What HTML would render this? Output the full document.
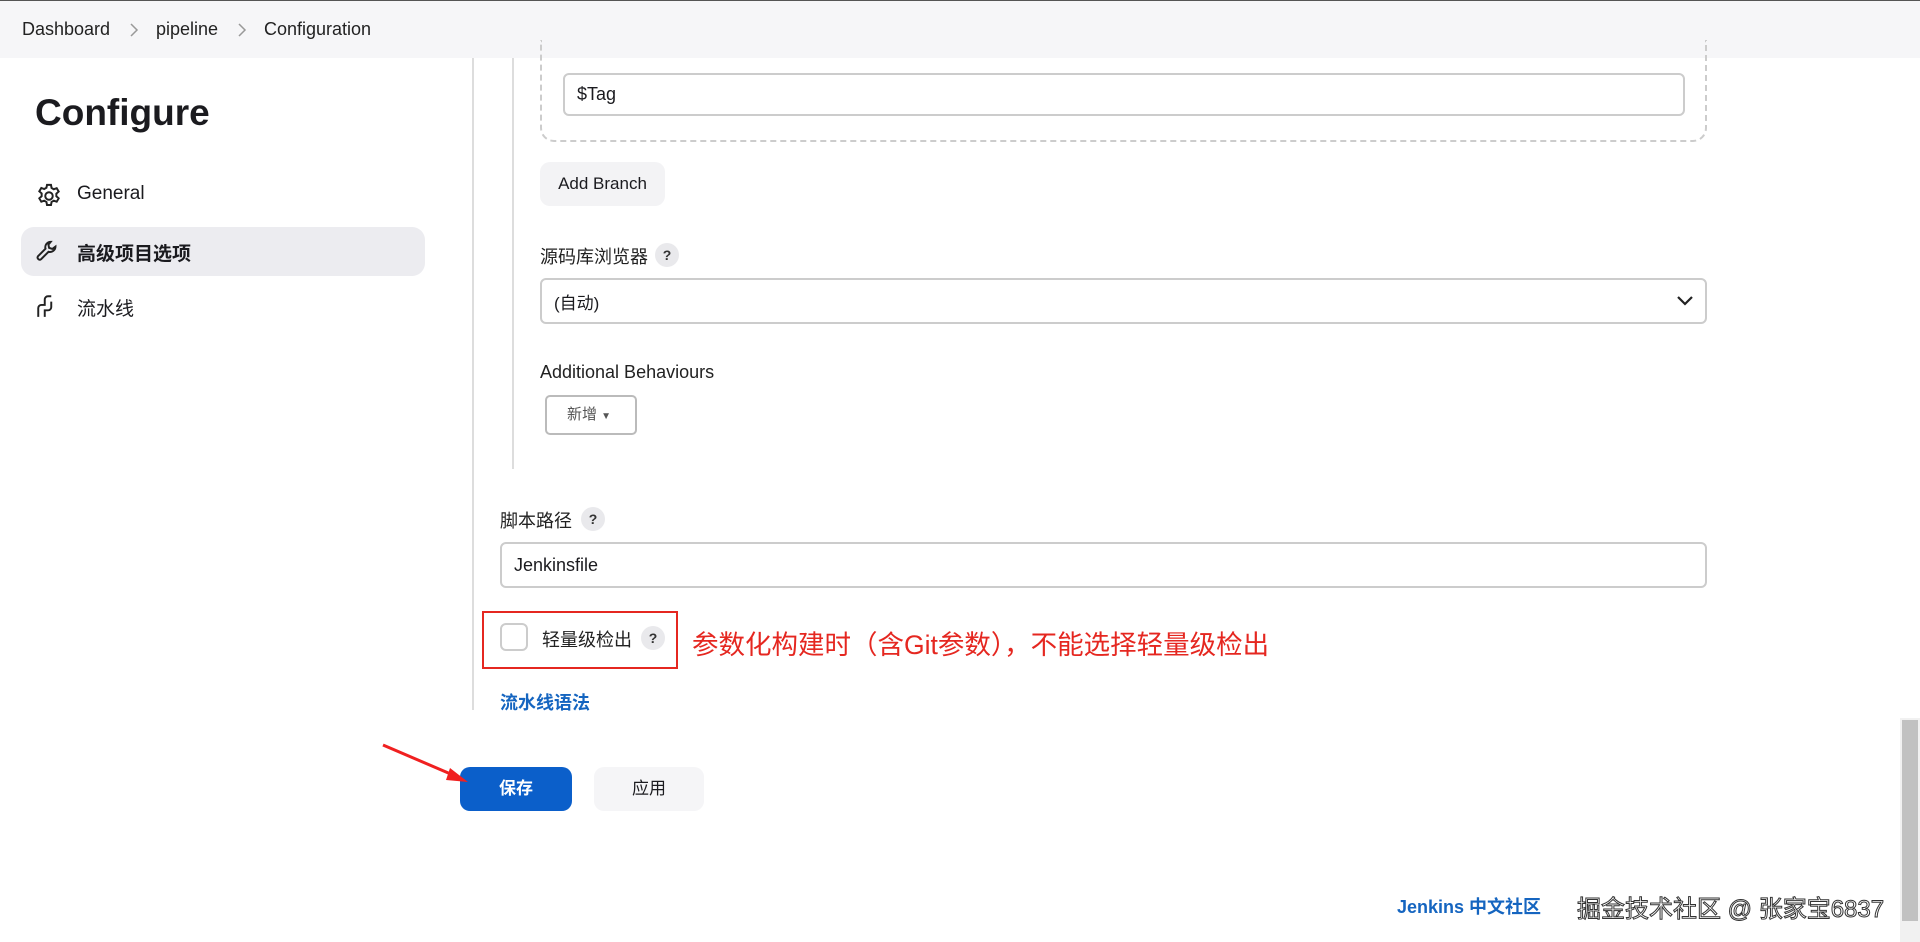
<!DOCTYPE html>
<html><head><meta charset="utf-8"><style>
*{box-sizing:border-box;margin:0;padding:0}
body{width:1920px;height:942px;overflow:hidden;background:#fff;font-family:"Liberation Sans","Noto Sans CJK SC",sans-serif;color:#1b1b1f;position:relative}
.a{position:absolute}
.bar{left:0;top:0;width:1920px;height:58px;background:#f6f6f8;border-top:1px solid #555}
.bc{top:19px;font-size:18px;color:#222}
.q{width:24px;height:24px;border-radius:50%;background:#e9e9ec;font-size:14px;font-weight:bold;text-align:center;line-height:24px;color:#333}
.inp{border:2px solid #ccc;border-radius:6px;background:#fff;font-size:18px;padding-left:20px;display:flex;align-items:center}
.lbl{font-size:18px;color:#222}
</style></head><body>
<div class="a bar"></div>
<div class="a bc" style="left:22px">Dashboard</div>
<svg class="a" style="left:128px;top:22px" width="12" height="16" viewBox="0 0 12 16" fill="none" stroke="#999" stroke-width="1.5"><path d="M3 2l6 6-6 6"/></svg>
<div class="a bc" style="left:156px">pipeline</div>
<svg class="a" style="left:236px;top:22px" width="12" height="16" viewBox="0 0 12 16" fill="none" stroke="#999" stroke-width="1.5"><path d="M3 2l6 6-6 6"/></svg>
<div class="a bc" style="left:264px">Configuration</div>

<div class="a" style="left:35px;top:92px;font-size:37px;font-weight:bold">Configure</div>
<svg class="a" style="left:35px;top:182px" width="28" height="28" viewBox="0 0 24 24" fill="none" stroke="#222" stroke-width="1.7"><circle cx="12" cy="12" r="3.2"/><path d="M10.3 2.5h3.4l.5 2.6 1.9 1.1 2.5-.9 1.7 2.9-2 1.8v2.2l2 1.8-1.7 2.9-2.5-.9-1.9 1.1-.5 2.6h-3.4l-.5-2.6-1.9-1.1-2.5.9-1.7-2.9 2-1.8V9.8l-2-1.8 1.7-2.9 2.5.9 1.9-1.1z"/></svg>
<div class="a" style="left:77px;top:183px;font-size:19px">General</div>
<div class="a" style="left:21px;top:227px;width:404px;height:49px;background:#ececf0;border-radius:13px"></div>
<svg class="a" style="left:35px;top:238px" width="26" height="26" viewBox="0 0 24 24" fill="none" stroke="#222" stroke-width="1.8"><path d="M14.5 3.5a5 5 0 0 0-4.8 6.4L2.8 16.8a2 2 0 0 0 2.8 2.8l6.9-6.9a5 5 0 0 0 6.4-4.8l-2.9 2.2-3-1 -.6-3z"/></svg>
<div class="a" style="left:77px;top:239px;font-size:19px;font-weight:bold">高级项目选项</div>
<svg class="a" style="left:35px;top:293px" width="26" height="26" viewBox="0 0 24 24" fill="none" stroke="#222" stroke-width="1.8"><path d="M3 22v-8a3 3 0 0 1 3-3h3V6a3 3 0 0 1 3-3h3M9 22v-6h3a3 3 0 0 0 3-3V8"/></svg>
<div class="a" style="left:77px;top:294px;font-size:19px">流水线</div>

<div class="a" style="left:472px;top:58px;width:2px;height:652px;background:#ddd"></div>
<div class="a" style="left:512px;top:58px;width:2px;height:411px;background:#ddd"></div>
<div class="a" style="left:540px;top:40px;width:1167px;height:102px;border:2px dashed #ccc;border-top:none;border-radius:0 0 14px 14px"></div>
<div class="a inp" style="left:563px;top:73px;width:1122px;height:43px;padding-left:12px">$Tag</div>
<div class="a" style="left:540px;top:162px;width:125px;height:44px;background:#f3f3f5;border-radius:10px;font-size:17px;line-height:44px;text-align:center">Add Branch</div>
<div class="a lbl" style="left:540px;top:243px">源码库浏览器</div>
<div class="a q" style="left:655px;top:243px">?</div>
<div class="a inp" style="left:540px;top:278px;width:1167px;height:46px;font-size:17px;padding-left:12px">(自动)</div>
<svg class="a" style="left:1675px;top:292px" width="20" height="18" viewBox="0 0 20 18" fill="none" stroke="#222" stroke-width="2.2"><path d="M3 5l7 7 7-7"/></svg>
<div class="a lbl" style="left:540px;top:362px">Additional Behaviours</div>
<div class="a" style="left:545px;top:395px;width:92px;height:40px;border:2px solid #bbb;border-radius:5px;font-size:15px;color:#555;line-height:36px;padding-left:20px">新增 <span style="font-size:10px">▼</span></div>

<div class="a lbl" style="left:500px;top:507px">脚本路径</div>
<div class="a q" style="left:581px;top:507px">?</div>
<div class="a inp" style="left:500px;top:542px;width:1207px;height:46px;padding-left:12px">Jenkinsfile</div>
<div class="a" style="left:482px;top:611px;width:196px;height:58px;border:2px solid #e52720"></div>
<div class="a" style="left:500px;top:623px;width:28px;height:28px;border:2px solid #ccc;border-radius:6px"></div>
<div class="a lbl" style="left:542px;top:626px">轻量级检出</div>
<div class="a q" style="left:641px;top:626px">?</div>
<div class="a" style="left:692px;top:623px;font-size:26.5px;color:#e52720">参数化构建时（含Git参数），不能选择轻量级检出</div>
<div class="a" style="left:500px;top:689px;font-size:18px;font-weight:bold;color:#1565c0">流水线语法</div>

<div class="a" style="left:460px;top:767px;width:112px;height:44px;background:#0b5fca;border-radius:10px;color:#fff;font-weight:bold;font-size:17px;text-align:center;line-height:44px">保存</div>
<div class="a" style="left:594px;top:767px;width:110px;height:44px;background:#f5f5f7;border-radius:10px;font-size:17px;text-align:center;line-height:44px">应用</div>
<svg class="a" style="left:370px;top:735px" width="110" height="60"><path d="M13 10 L90 43" stroke="#f02020" stroke-width="3"/><path d="M98 47 L80 33 L76 45z" fill="#f02020"/></svg>

<div class="a" style="left:1397px;top:893px;font-size:18px;font-weight:bold;color:#1565c0">Jenkins 中文社区</div>
<div class="a" style="left:1577px;top:889px;font-size:24px;color:#fff;-webkit-text-stroke:1px #333">掘金技术社区 @ 张家宝6837</div>
<div class="a" style="left:1900px;top:718px;width:20px;height:224px;background:#f1f1f1"></div>
<div class="a" style="left:1902px;top:720px;width:16px;height:201px;background:#c1c1c1"></div>
</body></html>
